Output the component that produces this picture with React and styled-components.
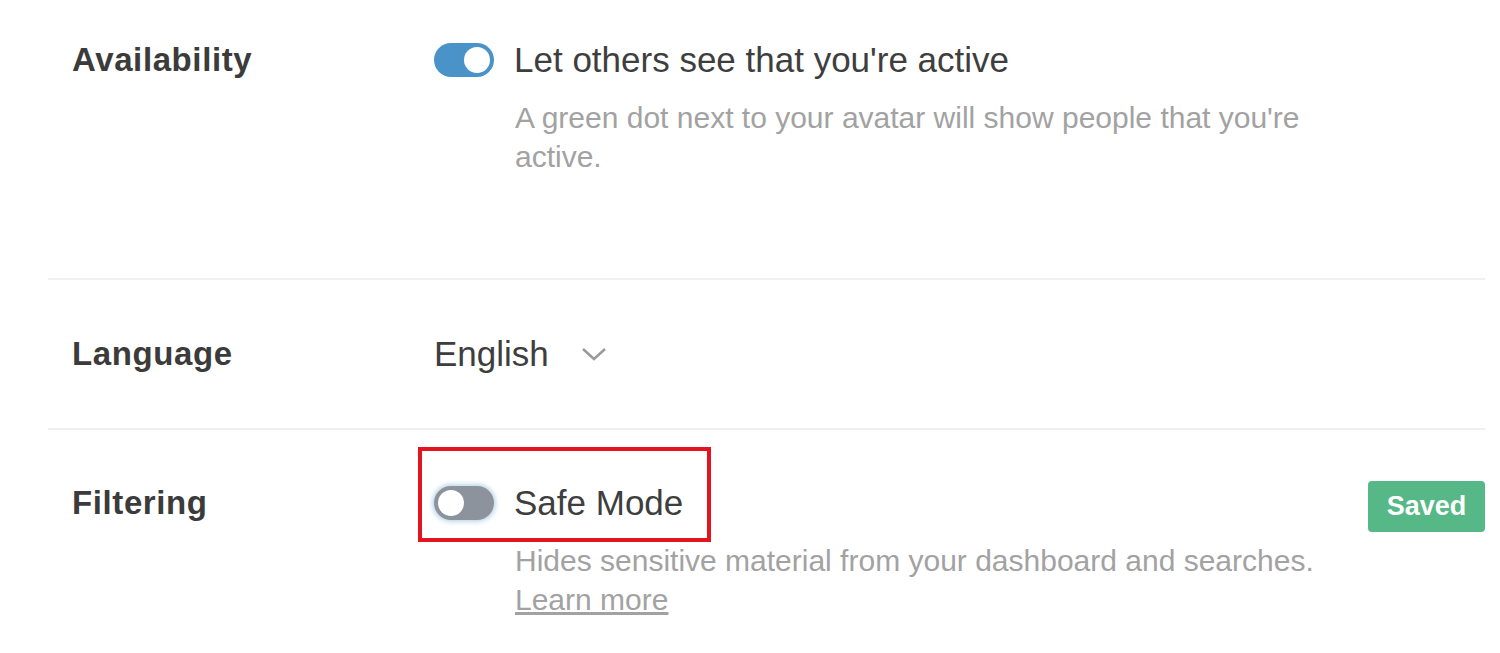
import React from 'react'
import styled, { createGlobalStyle } from 'styled-components'

const GlobalStyle = createGlobalStyle`
    body {
        margin: 0;
        background: #fff;
        font-family: "Liberation Sans", Arial, sans-serif;
    }
`

const Page = styled.div`
    width: 1437px;
    margin-left: 48px;
`

const Row = styled.div`
    display: grid;
    grid-template-columns: 362px 1fr auto;
    align-items: ${props => (props.center ? 'center' : 'start')};
    height: ${props => props.height}px;
    padding: ${props => props.pad || 0}px 0 0 24px;
    box-sizing: border-box;
    border-bottom: ${props => (props.last ? 'none' : '2px solid #f0f0f0')};
`

const Label = styled.div`
    font-size: 33px;
    font-weight: bold;
    color: #3b3b3b;
    line-height: 36px;
    letter-spacing: 0.6px;
`

const Content = styled.div`
    display: flex;
    flex-direction: column;
`

const ToggleLine = styled.div`
    position: relative;
    display: flex;
    align-items: center;
    gap: 20px;

    ${props => props.highlight && `
        &::after {
            content: '';
            position: absolute;
            left: -16px;
            top: -38px;
            width: 285px;
            height: 87px;
            border: 4px solid #e3141d;
        }
    `}
`

const Toggle = styled.div`
    width: 60px;
    height: 34px;
    border-radius: 17px;
    background: ${props => (props.on ? '#4a93c9' : '#8d939c')};
    display: flex;
    align-items: center;
    justify-content: ${props => (props.on ? 'flex-end' : 'flex-start')};
    padding: 0 4px;
    box-sizing: border-box;
    box-shadow: ${props => (props.on ? 'none' : '0 0 4px 2px rgba(150, 190, 220, 0.6)')};
`

const Knob = styled.div`
    width: 26px;
    height: 26px;
    border-radius: 50%;
    background: #fff;
`

const Title = styled.div`
    font-size: 35px;
    color: #3e3e3e;
    line-height: 36px;
`

const Description = styled.p`
    margin: 20px 0 0 81px;
    width: 800px;
    font-size: 30px;
    line-height: 39px;
    color: #a2a2a2;
`

const LearnMore = styled.a`
    color: #a2a2a2;
    text-decoration: underline;
`

const Select = styled.div`
    display: flex;
    align-items: center;
    gap: 32px;
    font-size: 35px;
    color: #3e3e3e;
`

const Saved = styled.div`
    margin-top: -4px;
    width: 117px;
    height: 51px;
    border-radius: 4px;
    background: #56b886;
    color: #fff;
    font-size: 27px;
    font-weight: bold;
    display: flex;
    align-items: center;
    justify-content: center;
`

export default function App() {
    return (
        <Page>
            <GlobalStyle />
            <Row height={280} pad={42}>
                <Label>Availability</Label>
                <Content>
                    <ToggleLine>
                        <Toggle on>
                            <Knob />
                        </Toggle>
                        <Title>Let others see that you're active</Title>
                    </ToggleLine>
                    <Description>
                        A green dot next to your avatar will show people that you're active.
                    </Description>
                </Content>
            </Row>

            <Row height={150} center>
                <Label>Language</Label>
                <Select>
                    English
                    <svg width="26" height="16" viewBox="0 0 26 16">
                        <path d="M2 3 L13 13 L24 3" fill="none" stroke="#9a9a9a" strokeWidth="2.5" />
                    </svg>
                </Select>
            </Row>

            <Row height={223} pad={55} last>
                <Label>Filtering</Label>
                <Content>
                    <ToggleLine highlight>
                        <Toggle>
                            <Knob />
                        </Toggle>
                        <Title>Safe Mode</Title>
                    </ToggleLine>
                    <Description>
                        Hides sensitive material from your dashboard and searches.<br />
                        <LearnMore>Learn more</LearnMore>
                    </Description>
                </Content>
                <Saved>Saved</Saved>
            </Row>
        </Page>
    )
}
